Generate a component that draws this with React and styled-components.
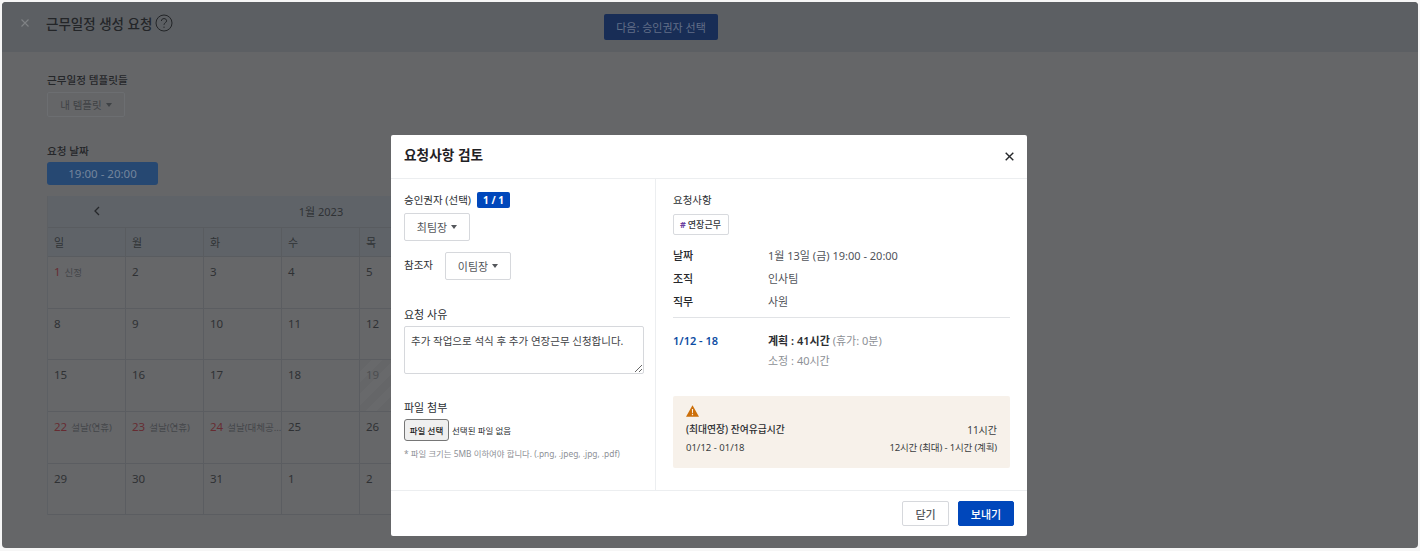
import React from 'react'
import styled, { createGlobalStyle } from 'styled-components'

const GlobalStyle = createGlobalStyle`
  * { box-sizing: border-box; }
  html, body { margin: 0; padding: 0; background: #fff; }
  body { font-family: "Noto Sans", "Noto Sans CJK KR", sans-serif; overflow: hidden; }
`

const Page = styled.div`
  position: relative;
  width: 1420px;
  height: 551px;
  padding: 2px;
  background: #f6f6f6;
`

const Frame = styled.div`
  width: 1416px;
  height: 546px;
  background: #656668;
  border-radius: 4px;
  overflow: hidden;
`

const TopBar = styled.header`
  position: relative;
  display: flex;
  align-items: center;
  height: 50px;
  padding: 0 0 9px 19px;
  background: #5c5f63;
`

const CloseMark = styled.svg`
  width: 8px;
  height: 8px;
  margin-right: 17px;
  stroke: #7f8285;
  stroke-width: 1.1;
`

const PageTitle = styled.h1`
  margin: 0 3px 0 0;
  font-size: 13.5px;
  font-weight: 500;
  color: #232528;
`

const NextButton = styled.div`
  position: absolute;
  left: 602px;
  top: 12px;
  width: 114px;
  height: 26px;
  display: flex;
  align-items: center;
  justify-content: center;
  background: #182d56;
  border-radius: 2px;
  font-size: 11px;
  color: #626f88;
`

const Content = styled.main`
  padding: 20px 0 0 45px;
`

const FieldLabel = styled.div`
  font-size: 10.6px;
  line-height: 16px;
  font-weight: 500;
  color: #25272a;
`

const GhostSelect = styled.div`
  display: flex;
  align-items: center;
  justify-content: center;
  gap: 4px;
  width: 78px;
  height: 25px;
  margin: 4px 0 26px;
  border: 1px solid #6c6e71;
  border-radius: 2px;
  font-size: 10.5px;
  color: #3f4245;
`

const Caret = styled.span`
  width: 0;
  height: 0;
  border-left: 3.5px solid transparent;
  border-right: 3.5px solid transparent;
  border-top: 4px solid ${(props) => props.color || '#3f4245'};
`

const TimeChip = styled.div`
  display: flex;
  align-items: center;
  justify-content: center;
  width: 111px;
  height: 23px;
  margin: 3px 0 11px;
  background: #264872;
  border-radius: 3px;
  font-size: 11.5px;
  color: #74859c;
`

const Calendar = styled.div`
  display: grid;
  grid-template-columns: repeat(7, 78px);
  grid-template-rows: 31px 30px repeat(5, 51.7px);
  width: 546px;
  background: #666769;
  border-left: 1px solid #5d6064;
`

const MonthBar = styled.div`
  grid-column: 1 / -1;
  position: relative;
  display: flex;
  align-items: center;
  justify-content: center;
  padding-bottom: 2px;
  background: #5f6368;
  font-size: 11px;
  color: #2f3235;
`

const PrevArrow = styled.svg`
  position: absolute;
  left: 45px;
  top: 10px;
  width: 8px;
  height: 10px;
  fill: none;
  stroke: #26282b;
  stroke-width: 1.3;
`

const Weekday = styled.div`
  display: flex;
  align-items: center;
  padding-left: 6px;
  background: #5f6368;
  border-right: 1px solid #595c60;
  border-top: 1px solid #595c60;
  border-bottom: 1px solid #595c60;
  font-size: 11px;
  color: #303336;
`

const Day = styled.div`
  display: flex;
  align-items: baseline;
  gap: 4px;
  padding: 7px 0 0 6px;
  border-right: 1px solid #5b5d61;
  border-bottom: 1px solid #5b5d61;
  font-size: 11.5px;
  line-height: 16px;
  white-space: nowrap;
  overflow: hidden;
  color: ${(props) => (props.$muted ? '#4c4e51' : props.$holiday ? '#662c32' : '#2f3134')};
  background: ${(props) =>
    props.$muted
      ? 'repeating-linear-gradient(135deg, #656668 0 8px, #68696b 8px 16px)'
      : 'transparent'};
`

const DayNote = styled.span`
  font-size: 9.5px;
  color: #44464a;
`

const Modal = styled.section`
  position: absolute;
  left: 391px;
  top: 135px;
  width: 636px;
  height: 401px;
  display: flex;
  flex-direction: column;
  background: #fff;
  border-radius: 2px;
  color: #26282b;
`

const ModalHeader = styled.div`
  display: flex;
  align-items: center;
  justify-content: space-between;
  height: 44px;
  padding: 0 13px;
  border-bottom: 1px solid #eceef0;
`

const ModalTitle = styled.h2`
  margin: 0;
  padding-bottom: 5px;
  font-size: 13.7px;
  font-weight: 600;
  color: #1f2124;
`

const ModalBody = styled.div`
  display: grid;
  grid-template-columns: 265px 1fr;
  height: 311px;
`

const LeftPane = styled.div`
  padding: 13px 12px 0 13px;
  border-right: 1px solid #eceef0;
`

const RightPane = styled.div`
  padding: 13px 17px 0 17px;
`

const Label = styled.div`
  font-size: 10.5px;
  line-height: 16px;
  color: #2c2f33;
`

const LabelRow = styled.div`
  display: flex;
  align-items: center;
  gap: 6px;
`

const CountBadge = styled.span`
  display: flex;
  align-items: center;
  justify-content: center;
  width: 33px;
  height: 16px;
  background: #0047bb;
  border-radius: 2px;
  font-size: 10px;
  font-weight: 700;
  color: #fff;
`

const Dropdown = styled.div`
  display: flex;
  align-items: center;
  justify-content: center;
  gap: 4px;
  width: 66px;
  height: 28px;
  border: 1px solid #d6d8dc;
  border-radius: 2px;
  font-size: 11px;
  color: #54575b;
`

const FirstDropdown = styled(Dropdown)`
  margin-top: 5px;
`

const RefRow = styled.div`
  display: flex;
  align-items: center;
  gap: 12px;
  margin-top: 11px;
`

const RefLabel = styled(Label)`
  margin-bottom: 3px;
`

const SectionLabel = styled(Label)`
  margin-top: ${(props) => props.$top || 0}px;
  font-size: 11px;
`

const Reason = styled.textarea`
  display: block;
  width: 240px;
  height: 48px;
  margin-top: 3px;
  padding: 6px;
  border: 1px solid #d6d8dc;
  border-radius: 2px;
  outline: none;
  font-family: inherit;
  font-size: 10.5px;
  line-height: 16px;
  color: #3e4145;
`

const FileRow = styled.div`
  display: flex;
  align-items: center;
  gap: 3px;
  margin-top: 3px;
`

const FileButton = styled.div`
  display: flex;
  align-items: center;
  justify-content: center;
  flex: none;
  width: 45px;
  height: 22px;
  background: #efefef;
  border: 1px solid #767676;
  border-radius: 3px;
  font-size: 8.5px;
  font-weight: 500;
  color: #1c1c1c;
`

const FileName = styled.span`
  font-size: 8.5px;
  color: #2a2c2f;
`

const FileHint = styled.div`
  margin-top: 6px;
  font-size: 8.4px;
  line-height: 14px;
  color: #8d9096;
`

const Tag = styled.div`
  display: inline-flex;
  align-items: center;
  gap: 2px;
  width: 56px;
  height: 21px;
  margin-top: 6px;
  padding: 0 6px;
  border: 1px solid #d8dade;
  border-radius: 2px;
  font-size: 9px;
  font-weight: 500;
  color: #33363a;
`

const Hash = styled.span`
  color: #6b3fa0;
  font-weight: 700;
`

const InfoList = styled.div`
  display: flex;
  flex-direction: column;
  gap: 7px;
  margin-top: 13px;
  padding-bottom: 7px;
  border-bottom: 1px solid #e1e3e6;
`

const InfoRow = styled.div`
  display: grid;
  grid-template-columns: 95px 1fr;
  font-size: 11px;
  line-height: 16px;
  color: #50535a;
`

const InfoKey = styled.span`
  color: #26282b;
  font-weight: 500;
`

const WeekBlock = styled.div`
  display: grid;
  grid-template-columns: 95px 1fr;
  grid-row-gap: 4px;
  margin-top: 15px;
  font-size: 11px;
  line-height: 16px;
`

const WeekRange = styled.span`
  color: #0c4ca3;
  font-weight: 600;
`

const Planned = styled.strong`
  font-weight: 600;
  color: #2b2d31;
`

const Muted = styled.span`
  color: #8d9096;
`

const WarningBox = styled.div`
  height: 72px;
  margin-top: 27px;
  padding: 9px 13px 0;
  background: #f7f1ea;
  border-radius: 2px;
  font-size: 9.5px;
  line-height: 14px;
  color: #3a3d41;
`

const WarnIcon = styled.svg`
  display: block;
  width: 13px;
  height: 12px;
`

const WarnRow = styled.div`
  display: flex;
  justify-content: space-between;
  margin-top: ${(props) => props.$top}px;
`

const WarnTitle = styled.span`
  font-size: 9.8px;
  font-weight: 500;
  color: #2b2d31;
`

const WarnHours = styled.span`
  font-size: 10px;
`

const WarnDetail = styled.span`
  letter-spacing: -0.15px;
`

const ModalFooter = styled.div`
  display: flex;
  align-items: center;
  justify-content: flex-end;
  gap: 9px;
  flex: 1;
  padding-right: 13px;
  border-top: 1px solid #eceef0;
`

const Button = styled.div`
  display: flex;
  align-items: center;
  justify-content: center;
  width: ${(props) => props.$width}px;
  height: 25px;
  border-radius: 2px;
  font-size: 11px;
  font-weight: 500;
  background: ${(props) => (props.$primary ? '#0047bb' : '#fff')};
  color: ${(props) => (props.$primary ? '#fff' : '#54575b')};
  border: 1px solid ${(props) => (props.$primary ? '#0047bb' : '#d6d8dc')};
`

const weekdays = ['일', '월', '화', '수', '목', '금', '토']

const days = [
  { n: 1, note: '신정', holiday: true }, { n: 2 }, { n: 3 }, { n: 4 }, { n: 5 }, { n: 6 }, { n: 7 },
  { n: 8 }, { n: 9 }, { n: 10 }, { n: 11 }, { n: 12 }, { n: 13 }, { n: 14 },
  { n: 15 }, { n: 16 }, { n: 17 }, { n: 18 }, { n: 19, muted: true }, { n: 20 }, { n: 21 },
  { n: 22, note: '설날(연휴)', holiday: true }, { n: 23, note: '설날(연휴)', holiday: true },
  { n: 24, note: '설날(대체공…', holiday: true }, { n: 25 }, { n: 26 }, { n: 27 }, { n: 28 },
  { n: 29 }, { n: 30 }, { n: 31 }, { n: 1 }, { n: 2 }, { n: 3 }, { n: 4 },
]

const HelpIcon = () => (
  <svg width="18" height="18" viewBox="0 0 18 18" fill="none" stroke="#232528" strokeWidth="1">
    <circle cx="9" cy="9" r="8" />
    <path d="M6.4 7c0-1.5 1.1-2.4 2.6-2.4s2.6.9 2.6 2.2c0 2-2.6 1.9-2.6 4" />
    <path d="M9 12.6v1.3" />
  </svg>
)

export default function App() {
  return (
    <Page>
      <GlobalStyle />
      <Frame>
        <TopBar>
          <CloseMark viewBox="0 0 8 8">
            <path d="M.5.5l7 7M7.5.5l-7 7" />
          </CloseMark>
          <PageTitle>근무일정 생성 요청</PageTitle>
          <HelpIcon />
          <NextButton>다음: 승인권자 선택</NextButton>
        </TopBar>
        <Content>
          <FieldLabel>근무일정 템플릿들</FieldLabel>
          <GhostSelect>
            내 템플릿 <Caret />
          </GhostSelect>
          <FieldLabel>요청 날짜</FieldLabel>
          <TimeChip>19:00 - 20:00</TimeChip>
          <Calendar>
            <MonthBar>
              <PrevArrow viewBox="0 0 8 10">
                <path d="M6 1L2 5l4 4" />
              </PrevArrow>
              1월 2023
            </MonthBar>
            {weekdays.map((w) => (
              <Weekday key={w}>{w}</Weekday>
            ))}
            {days.map((d, i) => (
              <Day key={i} $holiday={d.holiday} $muted={d.muted}>
                {d.n}
                {d.note && <DayNote>{d.note}</DayNote>}
              </Day>
            ))}
          </Calendar>
        </Content>
      </Frame>

      <Modal>
        <ModalHeader>
          <ModalTitle>요청사항 검토</ModalTitle>
          <svg width="9" height="9" viewBox="0 0 9 9" stroke="#26282b" strokeWidth="1.4">
            <path d="M.7.7l7.6 7.6M8.3.7L.7 8.3" />
          </svg>
        </ModalHeader>
        <ModalBody>
          <LeftPane>
            <LabelRow>
              <Label>승인권자 (선택)</Label>
              <CountBadge>1 / 1</CountBadge>
            </LabelRow>
            <FirstDropdown>
              최팀장 <Caret color="#54575b" />
            </FirstDropdown>
            <RefRow>
              <RefLabel>참조자</RefLabel>
              <Dropdown>
                이팀장 <Caret color="#54575b" />
              </Dropdown>
            </RefRow>
            <SectionLabel $top={27}>요청 사유</SectionLabel>
            <Reason defaultValue="추가 작업으로 석식 후 추가 연장근무 신청합니다." />
            <SectionLabel $top={26}>파일 첨부</SectionLabel>
            <FileRow>
              <FileButton>파일 선택</FileButton>
              <FileName>선택된 파일 없음</FileName>
            </FileRow>
            <FileHint>* 파일 크기는 5MB 이하여야 합니다. (.png, .jpeg, .jpg, .pdf)</FileHint>
          </LeftPane>
          <RightPane>
            <Label>요청사항</Label>
            <Tag>
              <Hash>#</Hash> 연장근무
            </Tag>
            <InfoList>
              <InfoRow>
                <InfoKey>날짜</InfoKey>
                <span>1월 13일 (금) 19:00 - 20:00</span>
              </InfoRow>
              <InfoRow>
                <InfoKey>조직</InfoKey>
                <span>인사팀</span>
              </InfoRow>
              <InfoRow>
                <InfoKey>직무</InfoKey>
                <span>사원</span>
              </InfoRow>
            </InfoList>
            <WeekBlock>
              <WeekRange>1/12 - 18</WeekRange>
              <span>
                <Planned>계획 : 41시간</Planned> <Muted>(휴가: 0분)</Muted>
              </span>
              <span />
              <Muted>소정 : 40시간</Muted>
            </WeekBlock>
            <WarningBox>
              <WarnIcon viewBox="0 0 13 12">
                <path d="M6.5.3L13 11.7H0z" fill="#cc6f0a" />
                <path d="M5.9 4h1.2l-.2 4.2h-.8zM5.9 9h1.2v1.2H5.9z" fill="#f7f1ea" />
              </WarnIcon>
              <WarnRow $top={6}>
                <WarnTitle>(최대연장) 잔여유급시간</WarnTitle>
                <WarnHours>11시간</WarnHours>
              </WarnRow>
              <WarnRow $top={4}>
                <span>01/12 - 01/18</span>
                <WarnDetail>12시간 (최대) - 1시간 (계획)</WarnDetail>
              </WarnRow>
            </WarningBox>
          </RightPane>
        </ModalBody>
        <ModalFooter>
          <Button $width={47}>닫기</Button>
          <Button $width={56} $primary>
            보내기
          </Button>
        </ModalFooter>
      </Modal>
    </Page>
  )
}
